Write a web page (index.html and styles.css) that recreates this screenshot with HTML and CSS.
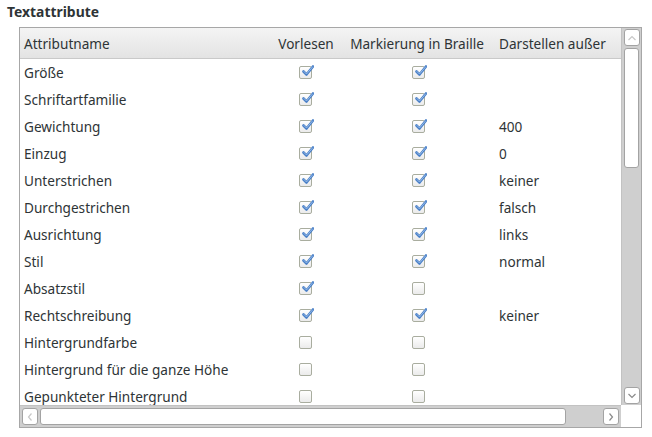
FILE: index.html
```html
<!DOCTYPE html>
<html>
<head>
<meta charset="utf-8">
<link rel="stylesheet" href="styles.css">
</head>
<body>
<div class="title">Textattribute</div>
<div class="frame">
  <div class="view">
    <div class="grid">
      <div class="hd c1">Attributname</div>
      <div class="hd c2">Vorlesen</div>
      <div class="hd c3">Markierung in Braille</div>
      <div class="hd c4">Darstellen außer</div>

      <div class="c1">Größe</div><div class="c2"><span class="cb on"></span></div><div class="c3"><span class="cb on"></span></div><div class="c4"></div>
      <div class="c1">Schriftartfamilie</div><div class="c2"><span class="cb on"></span></div><div class="c3"><span class="cb on"></span></div><div class="c4"></div>
      <div class="c1">Gewichtung</div><div class="c2"><span class="cb on"></span></div><div class="c3"><span class="cb on"></span></div><div class="c4">400</div>
      <div class="c1">Einzug</div><div class="c2"><span class="cb on"></span></div><div class="c3"><span class="cb on"></span></div><div class="c4">0</div>
      <div class="c1">Unterstrichen</div><div class="c2"><span class="cb on"></span></div><div class="c3"><span class="cb on"></span></div><div class="c4">keiner</div>
      <div class="c1">Durchgestrichen</div><div class="c2"><span class="cb on"></span></div><div class="c3"><span class="cb on"></span></div><div class="c4">falsch</div>
      <div class="c1">Ausrichtung</div><div class="c2"><span class="cb on"></span></div><div class="c3"><span class="cb on"></span></div><div class="c4">links</div>
      <div class="c1">Stil</div><div class="c2"><span class="cb on"></span></div><div class="c3"><span class="cb on"></span></div><div class="c4">normal</div>
      <div class="c1">Absatzstil</div><div class="c2"><span class="cb on"></span></div><div class="c3"><span class="cb"></span></div><div class="c4"></div>
      <div class="c1">Rechtschreibung</div><div class="c2"><span class="cb on"></span></div><div class="c3"><span class="cb on"></span></div><div class="c4">keiner</div>
      <div class="c1">Hintergrundfarbe</div><div class="c2"><span class="cb"></span></div><div class="c3"><span class="cb"></span></div><div class="c4"></div>
      <div class="c1">Hintergrund für die ganze Höhe</div><div class="c2"><span class="cb"></span></div><div class="c3"><span class="cb"></span></div><div class="c4"></div>
      <div class="c1">Gepunkteter Hintergrund</div><div class="c2"><span class="cb"></span></div><div class="c3"><span class="cb"></span></div><div class="c4"></div>
    </div>
  </div>
  <div class="vscroll">
    <div class="sbtn"><svg width="10" height="6" viewBox="0 0 10 6"><path d="M1.5 5 L5 1.5 L8.5 5" fill="none" stroke="#c8c8c8" stroke-width="1.2"/></svg></div>
    <div class="vthumb"></div>
    <div class="vspace"></div>
    <div class="sbtn"><svg width="10" height="6" viewBox="0 0 10 6"><path d="M1.5 1 L5 4.5 L8.5 1" fill="none" stroke="#8a8a8a" stroke-width="1.2"/></svg></div>
  </div>
  <div class="hscroll">
    <div class="sbtn"><svg width="6" height="10" viewBox="0 0 6 10"><path d="M4.5 1.5 L1.5 5 L4.5 8.5" fill="none" stroke="#c8c8c8" stroke-width="1.2"/></svg></div>
    <div class="hthumb"></div>
    <div class="hspace"></div>
    <div class="sbtn"><svg width="6" height="10" viewBox="0 0 6 10"><path d="M1.5 1.5 L4.5 5 L1.5 8.5" fill="none" stroke="#8a8a8a" stroke-width="1.2"/></svg></div>
  </div>
  <div class="corner"></div>
</div>
</body>
</html>
```
FILE: styles.css
```css
html, body {
  margin: 0;
  padding: 0;
  background: #ffffff;
}
body {
  font-family: "Noto Sans", "Open Sans", sans-serif;
  font-size: 13.6px;
  color: #2e3436;
  width: 652px;
  height: 437px;
  overflow: hidden;
}
.title {
  font-weight: bold;
  font-size: 13.9px;
  padding: 3px 0 0 7px;
  height: 24px;
  line-height: 17px;
  box-sizing: border-box;
}
.frame {
  margin-left: 19px;
  margin-top: 3px;
  width: 623px;
  height: 401px;
  box-sizing: border-box;
  border: 1px solid #a7a7a7;
  display: grid;
  grid-template-columns: 601px 20px;
  grid-template-rows: 377px 22px;
}
.view {
  overflow: hidden;
}
.grid {
  display: grid;
  grid-template-columns: 250px 72px 150px 129px;
  grid-template-rows: 31px;
  grid-auto-rows: 27px;
}
.grid > div {
  display: flex;
  align-items: center;
  white-space: nowrap;
  overflow: hidden;
}
.hd {
  height: 31px;
  background: linear-gradient(#f4f4f4, #e3e3e3);
  border-bottom: 1px solid #c9c9c9;
  box-sizing: border-box;
}
.c1 { padding-left: 4px; }
.c2 { justify-content: center; padding-right: 2px; }
.c3 { justify-content: center; padding-left: 2px; }
.c4 { padding-left: 7px; }
.hd.c2 { padding-right: 0; }
.hd.c3 { padding-left: 0; }
.cb {
  width: 13px;
  height: 13px;
  box-sizing: border-box;
  border: 1px solid #a9ad9f;
  border-radius: 2px;
  background: linear-gradient(#ffffff, #ebebeb);
  display: inline-block;
  position: relative;
}
.cb.on::after {
  content: "";
  position: absolute;
  left: 2px;
  top: -2px;
  width: 12px;
  height: 11px;
  background: url("data:image/svg+xml;utf8,<svg xmlns='http://www.w3.org/2000/svg' width='12' height='11' viewBox='0 0 12 11'><path d='M1.5 6.5 L4.5 9.5 L11 1.5' fill='none' stroke='%234a80c8' stroke-width='2.6' stroke-linecap='round' stroke-linejoin='round'/><path d='M2 6.5 L4.5 9 L10.5 2' fill='none' stroke='%23a8c8ee' stroke-width='0.8' stroke-linecap='round'/></svg>") no-repeat;
}
.vscroll {
  background: #cfcfcf;
  display: flex;
  flex-direction: column;
  padding: 1px 2px;
  gap: 2px;
  border-left: 1px solid #c2c2c2;
}
.hscroll {
  background: #cfcfcf;
  display: flex;
  flex-direction: row;
  padding: 2px 2px;
  gap: 2px;
  border-top: 1px solid #c2c2c2;
}
.sbtn {
  width: 16px;
  height: 17px;
  flex: none;
  box-sizing: border-box;
  background: #ffffff;
  border: 1px solid #a3a3a3;
  border-radius: 3px;
  display: flex;
  align-items: center;
  justify-content: center;
}
.vthumb {
  height: 118px;
  flex: none;
  background: #ffffff;
  border: 1px solid #a3a3a3;
  border-radius: 3px;
}
.vspace { flex: 1; }
.hthumb {
  width: 526px;
  flex: none;
  background: #ffffff;
  border: 1px solid #a3a3a3;
  border-radius: 3px;
  box-sizing: border-box;
}
.hspace { flex: 1; }
.corner {
  background: #ffffff;
}
```
